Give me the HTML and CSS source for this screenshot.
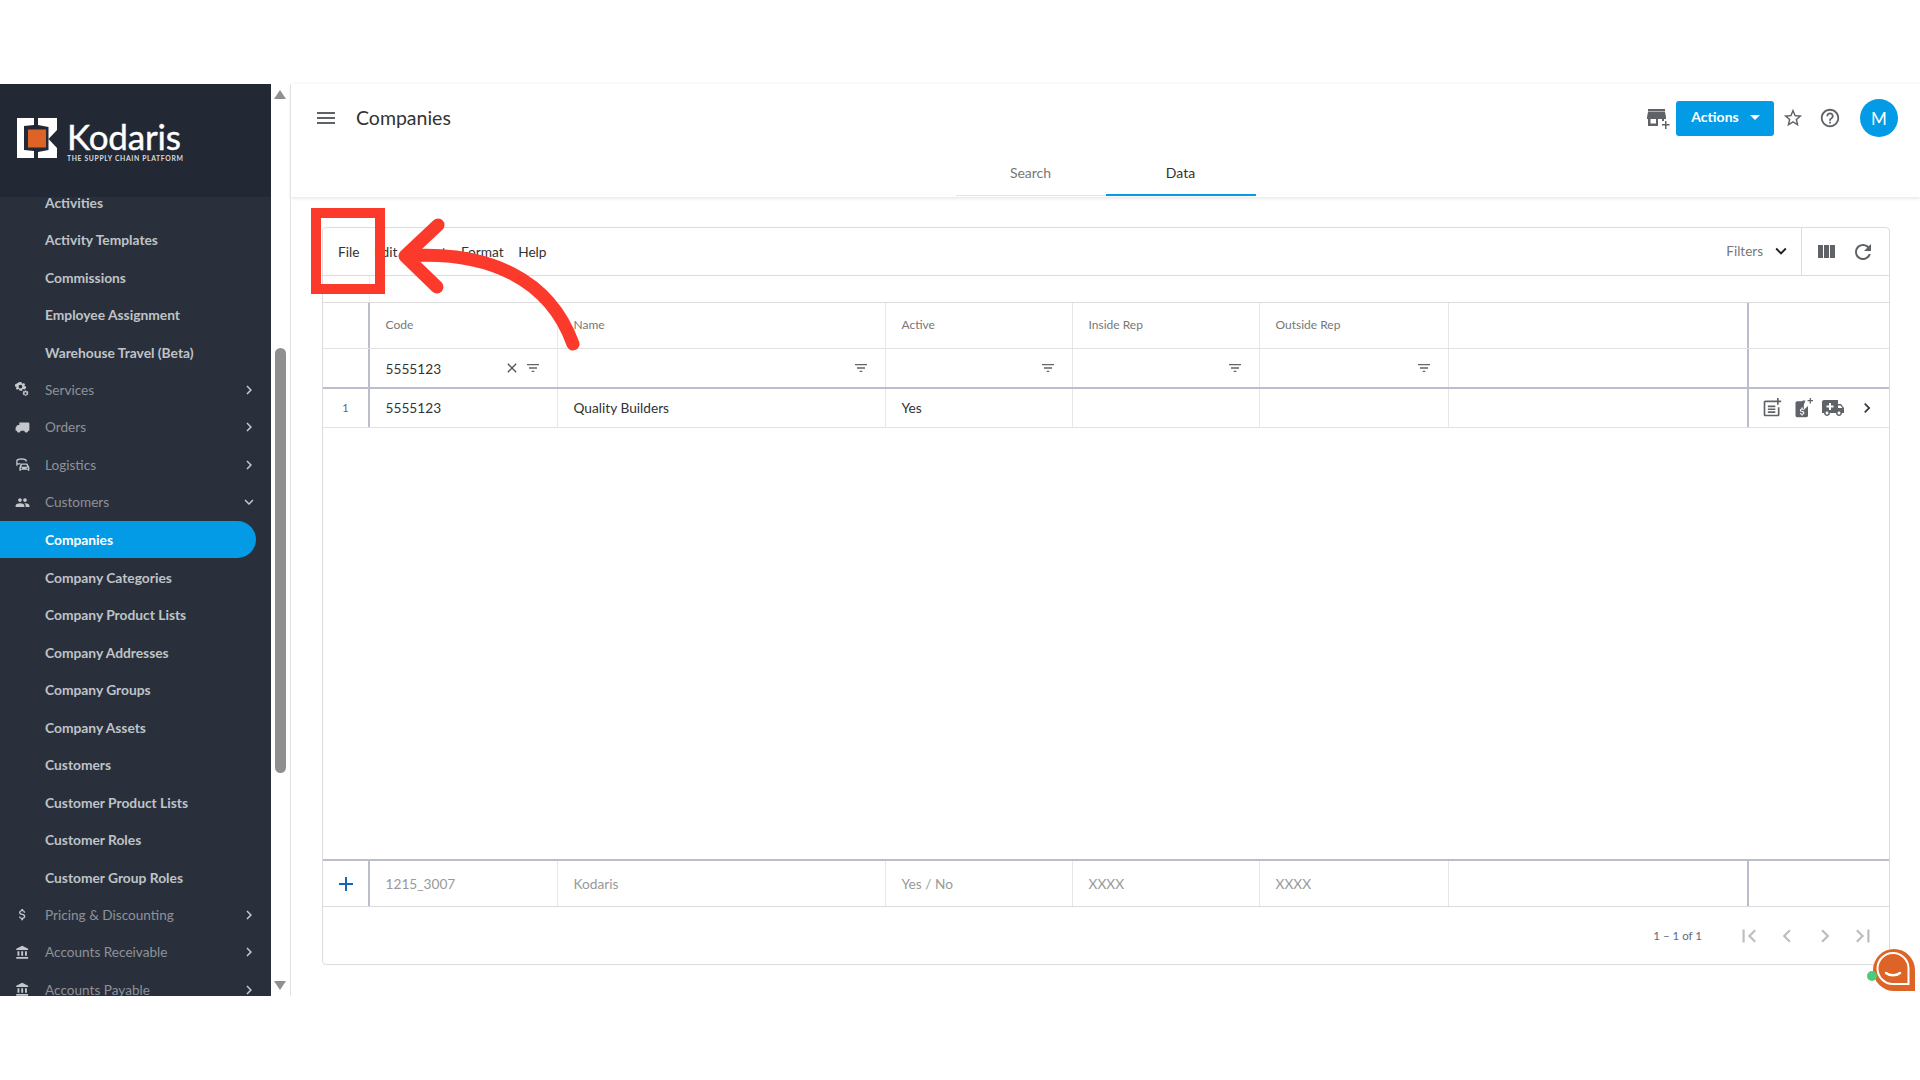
FILE: index.html
```html
<!DOCTYPE html>
<html lang="en">
<head>
  <meta charset="UTF-8">
  <meta name="viewport" content="width=device-width, initial-scale=1.0">
  <title>Companies</title>
  <link rel="stylesheet" href="styles.css">
</head>
<body>

<svg class="sprite" xmlns="http://www.w3.org/2000/svg">
  <symbol id="i-menu" viewBox="0 0 24 24"><path d="M3 18h18v-2H3v2zm0-5h18v-2H3v2zm0-7v2h18V6H3z"/></symbol>
  <symbol id="i-star" viewBox="0 0 24 24"><path d="M22 9.24l-7.19-.62L12 2 9.19 8.63 2 9.24l5.46 4.73L5.82 21 12 17.27 18.18 21l-1.63-7.03L22 9.24zM12 15.4l-3.76 2.27 1-4.28-3.32-2.88 4.38-.38L12 6.1l1.71 4.04 4.38.38-3.32 2.88 1 4.28L12 15.4z"/></symbol>
  <symbol id="i-help" viewBox="0 0 24 24"><path d="M11 18h2v-2h-2v2zm1-16C6.48 2 2 6.48 2 12s4.48 10 10 10 10-4.48 10-10S17.52 2 12 2zm0 18c-4.41 0-8-3.59-8-8s3.59-8 8-8 8 3.59 8 8-3.59 8-8 8zm0-14c-2.21 0-4 1.79-4 4h2c0-1.1.9-2 2-2s2 .9 2 2c0 2-3 1.75-3 5h2c0-2.25 3-2.5 3-5 0-2.21-1.79-4-4-4z"/></symbol>
  <symbol id="i-store" viewBox="0 0 24 24"><path d="M19 3H2v2.500h17V3zm1 10v-2l-1-5H2l-1 5v2h1v7h10v-7h4v2h2v-2h2zm-10 4.500H4.500V13H10v4.500z"/><path d="M20 15h1.500v3H24.500v1.500h-3V23H20v-3.500h-3V18h3z" transform="translate(-1 0)"/></symbol>
  <symbol id="i-columns" viewBox="0 0 24 24"><path d="M10 18h5V5h-5v13zm-6 0h5V5H4v13zM16 5v13h5V5h-5z"/></symbol>
  <symbol id="i-refresh" viewBox="0 0 24 24"><path d="M17.65 6.350C16.200 4.900 14.210 4 12 4c-4.420 0-7.990 3.580-7.990 8s3.570 8 7.990 8c3.730 0 6.840-2.550 7.730-6h-2.080c-.82 2.330-3.040 4-5.650 4-3.310 0-6-2.690-6-6s2.690-6 6-6c1.660 0 3.140.69 4.220 1.780L13 11h7V4l-2.350 2.350z"/></symbol>
  <symbol id="i-down" viewBox="0 0 24 24"><path d="M16.590 8.590L12 13.170 7.410 8.590 6 10l6 6 6-6z"/></symbol>
  <symbol id="i-right" viewBox="0 0 24 24"><path d="M10 6L8.590 7.410 13.170 12l-4.580 4.590L10 18l6-6z"/></symbol>
  <symbol id="i-left" viewBox="0 0 24 24"><path d="M15.410 7.410L14 6l-6 6 6 6 1.410-1.410L10.830 12z"/></symbol>
  <symbol id="i-close" viewBox="0 0 24 24"><path d="M19 6.410L17.590 5 12 10.590 6.410 5 5 6.410 10.590 12 5 17.590 6.410 19 12 13.410 17.590 19 19 17.590 13.410 12z"/></symbol>
  <symbol id="i-filter" viewBox="0 0 24 24"><path d="M10 18h4v-2h-4v2zM3 6v2h18V6H3zm3 7h12v-2H6v2z"/></symbol>
  <symbol id="i-first" viewBox="0 0 24 24"><path d="M18.410 16.590L13.820 12l4.590-4.590L17 6l-6 6 6 6zM6 6h2v12H6z"/></symbol>
  <symbol id="i-last" viewBox="0 0 24 24"><path d="M5.590 7.410L10.180 12l-4.590 4.590L7 18l6-6-6-6zM16 6h2v12h-2z"/></symbol>
  <symbol id="i-add" viewBox="0 0 24 24"><path d="M19 13h-6v6h-2v-6H5v-2h6V5h2v6h6v2z"/></symbol>
  <symbol id="i-people" viewBox="0 0 24 24"><path d="M16 11c1.660 0 2.990-1.340 2.990-3S17.660 5 16 5c-1.660 0-3 1.340-3 3s1.340 3 3 3zm-8 0c1.660 0 2.990-1.340 2.990-3S9.660 5 8 5C6.340 5 5 6.340 5 8s1.340 3 3 3zm0 2c-2.330 0-7 1.170-7 3.500V19h14v-2.500c0-2.330-4.670-3.500-7-3.500zm8 0c-.29 0-.62.02-.97.05 1.160.84 1.970 1.970 1.970 3.450V19h6v-2.500c0-2.330-4.670-3.500-7-3.500z"/></symbol>
  <symbol id="i-bank" viewBox="0 0 24 24"><path d="M4 10v7h3v-7H4zm6 0v7h3v-7h-3zM2 22h19v-3H2v3zm14-12v7h3v-7h-3zm-4.500-9L2 6v2h19V6l-9.500-5z"/></symbol>
  <symbol id="i-dollar" viewBox="0 0 24 24"><path d="M11.800 10.900c-2.270-.59-3-1.200-3-2.150 0-1.090 1.010-1.850 2.700-1.850 1.780 0 2.440.85 2.500 2.100h2.210c-.07-1.720-1.120-3.300-3.210-3.810V3h-3v2.160c-1.940.42-3.500 1.680-3.500 3.610 0 2.310 1.910 3.460 4.700 4.130 2.500.6 3 1.480 3 2.410 0 .69-.49 1.790-2.700 1.790-2.060 0-2.870-.92-2.980-2.100h-2.200c.12 2.190 1.760 3.420 3.680 3.830V21h3v-2.150c1.950-.37 3.500-1.500 3.500-3.550 0-2.840-2.430-3.810-4.700-4.400z"/></symbol>
  <symbol id="i-gears" viewBox="0 0 24 24"><path fill-rule="evenodd" d="M8 1h3.500l.5 2.200 1.700.8 2-1.200 2.300 2.400-1.200 1.900.8 1.700 2.100.5v3.300l-2.100.5-.8 1.700-2-1.200-1.700.8-.5 2.200H8l-.5-2.200-1.700-.8-2 1.200L1.500 13l1.200-1.900-.8-1.700L0 8.900V5.600zm1.700 5a3.300 3.300 0 1 0 0 6.600 3.300 3.300 0 0 0 0-6.600z" transform="translate(0 -1) scale(.9)"/><path fill-rule="evenodd" d="M18 13.500l.6 1.500 1.600-.5 1.200 2-1.200 1.200 1.200 1.200-1.200 2-1.600-.5-.6 1.600h-2.300l-.6-1.600-1.600.5-1.200-2 1.200-1.200-1.200-1.200 1.200-2 1.600.5.600-1.500zm-1.200 3a1.700 1.700 0 1 0 0 3.400 1.700 1.700 0 0 0 0-3.400z"/></symbol>
  <symbol id="i-orders" viewBox="0 0 24 24"><path d="M4 8h3V4h14c1.100 0 2 .9 2 2v11h-2c0 1.660-1.340 3-3 3s-3-1.340-3-3H9c0 1.660-1.340 3-3 3s-3-1.340-3-3H1v-5l3-4z"/></symbol>
  <symbol id="i-logistics" viewBox="0 0 24 24"><path d="M2 14V6c0-2.500 2.500-4 8.500-4S19 3.500 19 6v1h-2V6.500C16 5 14 4.200 10.500 4.200S5 5 4 6.500V10h5v2H4v2z"/><path fill-rule="evenodd" d="M21.400 12.500c-.2-.6-.8-1-1.400-1h-8.500c-.7 0-1.200.4-1.400 1L8 17.500V23h2.500v-1.500h11V23H24v-5.500zM12.200 13.500h7.100l1 3.200H11.200zM11.300 20.300a1.200 1.200 0 1 1 0-2.400 1.200 1.200 0 0 1 0 2.400zm9.400 0a1.200 1.200 0 1 1 0-2.400 1.200 1.200 0 0 1 0 2.400z" transform="translate(-1 -1)"/></symbol>
  <symbol id="i-note" viewBox="0 0 24 24"><path d="M19 11v9H4V5h11V3H4c-1.100 0-2 .9-2 2v15c0 1.100.9 2 2 2h15c1.100 0 2-.9 2-2v-9zM7 9h9v2H7zm0 3.500h9v2H7zM7 16h9v2H7zM20 0v3h3v2h-3v3h-2V5h-3V3h3V0z"/></symbol>
  <symbol id="i-tag" viewBox="0 0 24 24"><path d="M15 3l-3 0-1 1H5c-1.100 0-2 .9-2 2v15c0 1.100.9 2 2 2h11c1.100 0 2-.9 2-2V9.500L13 14V8zM11.700 19.700v1.300h-1.600v-1.200c-1-.2-1.800-.8-1.900-1.900h1.200c.1.600.5 1 1.500 1s1.400-.5 1.400-.9c0-.5-.3-.9-1.600-1.200-1.500-.3-2.500-.9-2.500-2.100 0-1 .8-1.700 1.900-1.900V11.500h1.600v1.300c1.100.3 1.700 1.100 1.700 2H12.300c0-.7-.4-1.100-1.300-1.100s-1.400.4-1.400.9.400.8 1.600 1.100 2.500.8 2.500 2.200c0 1-.8 1.600-2 1.800zM20 0h1.500v2.500H24V4h-2.500v2.500H20V4h-2.500V2.500H20z"/></symbol>
  <symbol id="i-truck" viewBox="0 0 24 24"><path fill-rule="evenodd" d="M20 8h-3V4H3c-1.100 0-2 .9-2 2v11h2c0 1.660 1.340 3 3 3s3-1.340 3-3h6c0 1.660 1.340 3 3 3s3-1.340 3-3h2v-5l-3-4zM6 18.500c-.83 0-1.500-.67-1.500-1.500s.67-1.500 1.500-1.500 1.500.67 1.500 1.500-.67 1.500-1.500 1.500zm13.500-9l1.960 2.500H17V9.500h2.500zm-1.500 9c-.83 0-1.500-.67-1.500-1.500s.67-1.500 1.500-1.500 1.500.67 1.500 1.500-.67 1.500-1.500 1.500zM8 7h2v2.500h2.500v2H10V14H8v-2.500H5.500v-2H8z"/></symbol>
</svg>

<div class="band-top"></div>

<div class="app">
  <aside class="sidebar">
    <div class="brand">
      <svg class="brand-mark" viewBox="0 0 40 40">
        <path fill="#fff" d="M0 0h17v7L7 8v24l10 1v7H0z"/>
        <path fill="#fff" d="M21 0H40V12L31.500 21L40 30V40H21V34L31.500 32V9L21 7z"/>
        <rect x="11" y="11.500" width="18" height="18" fill="#dd6426"/>
      </svg>
      <div class="brand-text">
        <span class="brand-name">Kodaris</span>
        <span class="brand-tag">THE SUPPLY CHAIN PLATFORM</span>
      </div>
    </div>
    <nav class="nav">
      <a class="nav-item">Activities</a>
      <a class="nav-item">Activity Templates</a>
      <a class="nav-item">Commissions</a>
      <a class="nav-item">Employee Assignment</a>
      <a class="nav-item">Warehouse Travel (Beta)</a>
      <a class="nav-item nav-group"><svg class="nav-icon"><use href="#i-gears"/></svg>Services<svg class="nav-arrow"><use href="#i-right"/></svg></a>
      <a class="nav-item nav-group"><svg class="nav-icon"><use href="#i-orders"/></svg>Orders<svg class="nav-arrow"><use href="#i-right"/></svg></a>
      <a class="nav-item nav-group"><svg class="nav-icon"><use href="#i-logistics"/></svg>Logistics<svg class="nav-arrow"><use href="#i-right"/></svg></a>
      <a class="nav-item nav-group"><svg class="nav-icon"><use href="#i-people"/></svg>Customers<svg class="nav-arrow"><use href="#i-down"/></svg></a>
      <a class="nav-item active">Companies</a>
      <a class="nav-item">Company Categories</a>
      <a class="nav-item">Company Product Lists</a>
      <a class="nav-item">Company Addresses</a>
      <a class="nav-item">Company Groups</a>
      <a class="nav-item">Company Assets</a>
      <a class="nav-item">Customers</a>
      <a class="nav-item">Customer Product Lists</a>
      <a class="nav-item">Customer Roles</a>
      <a class="nav-item">Customer Group Roles</a>
      <a class="nav-item nav-group"><svg class="nav-icon"><use href="#i-dollar"/></svg>Pricing &amp; Discounting<svg class="nav-arrow"><use href="#i-right"/></svg></a>
      <a class="nav-item nav-group"><svg class="nav-icon"><use href="#i-bank"/></svg>Accounts Receivable<svg class="nav-arrow"><use href="#i-right"/></svg></a>
      <a class="nav-item nav-group"><svg class="nav-icon"><use href="#i-bank"/></svg>Accounts Payable<svg class="nav-arrow"><use href="#i-right"/></svg></a>
    </nav>
  </aside>

  <div class="scrollbar">
    <span class="scroll-up"></span>
    <span class="scroll-thumb"></span>
    <span class="scroll-down"></span>
  </div>

  <main class="main">
    <header class="topbar">
      <div class="topbar-row">
        <svg class="menu-btn"><use href="#i-menu"/></svg>
        <h1 class="page-title">Companies</h1>
        <div class="topbar-actions">
          <svg class="store-btn"><use href="#i-store"/></svg>
          <button class="actions-btn">Actions<span class="caret"></span></button>
          <svg class="top-icon"><use href="#i-star"/></svg>
          <svg class="top-icon help"><use href="#i-help"/></svg>
          <span class="avatar">M</span>
        </div>
      </div>
      <div class="tabs">
        <span class="tab">Search</span>
        <span class="tab active">Data</span>
      </div>
    </header>

    <section class="content">
      <div class="card">
        <div class="toolbar">
          <div class="menu">
            <span>File</span><span>Edit</span><span>Insert</span><span>Format</span><span>Help</span>
          </div>
          <div class="filters">Filters<svg class="filters-arrow"><use href="#i-down"/></svg></div>
          <div class="tools">
            <svg class="tool"><use href="#i-columns"/></svg>
            <svg class="tool"><use href="#i-refresh"/></svg>
          </div>
        </div>
        <div class="gap-row"><span></span></div>

        <div class="grid head-row">
          <div class="cell num"></div>
          <div class="cell">Code</div>
          <div class="cell">Name</div>
          <div class="cell">Active</div>
          <div class="cell">Inside Rep</div>
          <div class="cell">Outside Rep</div>
          <div class="cell blank"></div>
          <div class="cell"></div>
        </div>
        <div class="grid filter-row">
          <div class="cell num"></div>
          <div class="cell">5555123<svg class="clear-icon"><use href="#i-close"/></svg><svg class="filter-icon"><use href="#i-filter"/></svg></div>
          <div class="cell"><svg class="filter-icon"><use href="#i-filter"/></svg></div>
          <div class="cell"><svg class="filter-icon"><use href="#i-filter"/></svg></div>
          <div class="cell"><svg class="filter-icon"><use href="#i-filter"/></svg></div>
          <div class="cell"><svg class="filter-icon"><use href="#i-filter"/></svg></div>
          <div class="cell blank"></div>
          <div class="cell"></div>
        </div>
        <div class="grid data-row">
          <div class="cell num">1</div>
          <div class="cell">5555123</div>
          <div class="cell">Quality Builders</div>
          <div class="cell">Yes</div>
          <div class="cell"></div>
          <div class="cell"></div>
          <div class="cell blank"></div>
          <div class="cell row-actions">
            <svg class="row-icon"><use href="#i-note"/></svg>
            <svg class="row-icon"><use href="#i-tag"/></svg>
            <svg class="row-icon truck"><use href="#i-truck"/></svg>
            <svg class="row-icon next"><use href="#i-right"/></svg>
          </div>
        </div>

        <div class="table-space"></div>

        <div class="grid add-row">
          <div class="cell num"><svg class="add-icon"><use href="#i-add"/></svg></div>
          <div class="cell">1215_3007</div>
          <div class="cell">Kodaris</div>
          <div class="cell">Yes / No</div>
          <div class="cell">XXXX</div>
          <div class="cell">XXXX</div>
          <div class="cell blank"></div>
          <div class="cell"></div>
        </div>

        <div class="pager">
          <span class="pager-label">1 – 1 of 1</span>
          <svg class="pager-icon"><use href="#i-first"/></svg>
          <svg class="pager-icon"><use href="#i-left"/></svg>
          <svg class="pager-icon"><use href="#i-right"/></svg>
          <svg class="pager-icon"><use href="#i-last"/></svg>
        </div>
      </div>
    </section>
  </main>
</div>

<!-- tutorial markup over the page -->
<div class="callout-box"></div>
<svg class="callout-arrow" width="220" height="170" viewBox="380 200 220 170">
  <path d="M405 256C490 250 550 280 573 344M438 225L405 256L437 287" fill="none" stroke="#fb3a2c" stroke-width="13" stroke-linecap="round" stroke-linejoin="round"/>
</svg>

<div class="chat-widget">
  <svg width="42" height="42" viewBox="0 0 42 42">
    <path fill="#dd6426" d="M21 0a21 21 0 0 1 21 21v21H21A21 21 0 0 1 21 0z"/>
    <path fill="none" stroke="#fff" stroke-width="2" d="M21 4a15.500 15.500 0 0 1 15.500 15.500V35H21a15.500 15.500 0 0 1 0-31z" transform="translate(-1 0)"/>
    <path fill="none" stroke="#fff" stroke-width="2.500" stroke-linecap="round" d="M13 24c4 3 10 3 14 0"/>
  </svg>
  <span class="chat-dot"></span>
</div>

</body>
</html>
```

FILE: styles.css
```css
* {
  box-sizing: border-box;
}
body {
  font-family: "Lato", "Noto Sans", sans-serif;
  margin: 0;
  padding: 0;
  width: 1920px;
  height: 1080px;
  overflow: hidden;
  position: relative;
  background-color: #fff;
  color: #333;
}
.sprite {
  display: none;
}
svg {
  fill: currentColor;
}
.band-top {
  height: 84px;
}
.app {
  display: flex;
  height: 912px;
}

/* sidebar */
.sidebar {
  width: 271px;
  background-color: #2a303b;
  overflow: hidden;
  flex-shrink: 0;
}
.brand {
  position: relative;
  z-index: 1;
  display: flex;
  gap: 10px;
  height: 113px;
  padding: 34px 0 0 17px;
  background-color: #232934;
}
.brand-mark {
  width: 40px;
  height: 40px;
}
.brand-text {
  display: flex;
  flex-direction: column;
  color: #fff;
}
.brand-name {
  font-size: 35px;
  line-height: 36px;
  letter-spacing: -0.2px;
  -webkit-text-stroke: 0.4px #fff;
}
.brand-tag {
  font-size: 6.800px;
  font-weight: 700;
  letter-spacing: 0.65px;
  line-height: 8px;
  white-space: nowrap;
  color: #d8dadd;
}
.nav {
  margin-top: -13.700px;
}
.nav-item {
  display: flex;
  align-items: center;
  height: 37.500px;
  padding-left: 45px;
  font-size: 13.800px;
  font-weight: 700;
  color: #bfc3c8;
}
.nav-group {
  position: relative;
  font-size: 13.600px;
  font-weight: 400;
  color: #8d929a;
}
.nav-item.active {
  width: 256px;
  background-color: #039be5;
  color: #fff;
  border-radius: 0 19px 19px 0;
}
.nav-icon {
  position: absolute;
  left: 15px;
  width: 15px;
  height: 15px;
  color: #c4c7cb;
}
.nav-arrow {
  position: absolute;
  left: 240px;
  width: 18px;
  height: 18px;
  color: #c4c7cb;
}

/* fake scrollbar */
.scrollbar {
  position: relative;
  width: 20px;
  border-right: 1px solid #e2e2e2;
  flex-shrink: 0;
}
.scroll-up,
.scroll-down {
  position: absolute;
  left: 3px;
  width: 0;
  height: 0;
  border-left: 6px solid transparent;
  border-right: 6px solid transparent;
}
.scroll-up {
  top: 6px;
  border-bottom: 9px solid #8f8f8f;
}
.scroll-down {
  bottom: 6px;
  border-top: 9px solid #8f8f8f;
}
.scroll-thumb {
  position: absolute;
  left: 4px;
  top: 264px;
  width: 11px;
  height: 425px;
  background-color: #8f8f8f;
  border-radius: 6px;
}

/* main */
.main {
  flex: 1;
  display: flex;
  flex-direction: column;
  min-width: 0;
}
.topbar {
  height: 113px;
  box-shadow: 0 1px 4px rgba(0, 0, 0, 0.12);
}
.topbar-row {
  display: flex;
  align-items: center;
  height: 68px;
  padding: 0 22px 0 23px;
}
.menu-btn {
  width: 24px;
  height: 24px;
  color: #5f6368;
}
.page-title {
  margin: -2px 0 0 18px;
  font-size: 19.500px;
  font-weight: 400;
  color: #333;
}
.topbar-actions {
  margin-left: auto;
  display: flex;
  align-items: center;
}
.store-btn {
  width: 24px;
  height: 24px;
  margin-right: 6px;
  color: #5f6368;
}
.actions-btn {
  display: flex;
  align-items: center;
  justify-content: center;
  gap: 11px;
  width: 98px;
  height: 35px;
  padding: 0 0 3px 1px;
  border: 0;
  border-radius: 3px;
  background-color: #039be5;
  color: #fff;
  font-family: inherit;
  font-size: 14px;
  font-weight: 700;
}
.caret {
  width: 0;
  height: 0;
  margin-top: 2px;
  border-left: 5px solid transparent;
  border-right: 5px solid transparent;
  border-top: 5px solid #fff;
}
.top-icon {
  width: 22px;
  height: 22px;
  margin-left: 8px;
  color: #5f6368;
}
.top-icon.help {
  width: 22px;
  margin-left: 15px;
}
.avatar {
  display: flex;
  align-items: center;
  justify-content: center;
  width: 38px;
  height: 38px;
  margin-left: 19px;
  border-radius: 50%;
  background-color: #039be5;
  color: #fff;
  font-size: 17px;
}
.tabs {
  display: flex;
  justify-content: center;
}
.tab {
  width: 150px;
  height: 44px;
  padding-bottom: 2px;
  display: flex;
  align-items: center;
  justify-content: center;
  font-size: 14px;
  color: #777;
  border-bottom: 1px solid #e4e4e4;
}
.tab.active {
  color: #333;
  border-bottom: 2px solid #039be5;
}

/* card + table */
.content {
  flex: 1;
  min-height: 0;
  padding: 30px 30px 31px 31px;
}
.card {
  height: 100%;
  display: flex;
  flex-direction: column;
  border: 1px solid #dcdcdc;
  border-radius: 4px;
}
.toolbar {
  display: flex;
  align-items: center;
  height: 48px;
  flex-shrink: 0;
  border-bottom: 1px solid #dcdcdc;
}
.menu {
  display: flex;
  gap: 14.500px;
  padding-left: 15px;
  font-size: 13.700px;
  color: #333;
}
.filters {
  margin-left: auto;
  display: flex;
  align-items: center;
  gap: 7px;
  padding-bottom: 1px;
  font-size: 13.500px;
  color: #777;
  padding-right: 9px;
}
.filters-arrow {
  width: 22px;
  height: 22px;
  color: #222;
}
.tools {
  display: flex;
  align-items: center;
  gap: 13px;
  height: 100%;
  width: 88px;
  padding-left: 12px;
  border-left: 1px solid #dcdcdc;
}
.tool {
  width: 24px;
  height: 24px;
  color: #5f6368;
}
.gap-row {
  height: 27px;
  flex-shrink: 0;
  border-bottom: 1px solid #dcdcdc;
}
.gap-row span {
  display: block;
  width: 47px;
  height: 26px;
  border-right: 1px solid #eee;
}
.grid {
  display: grid;
  grid-template-columns: 47px 188px 328px 187px 187px 189px 300px 1fr;
  flex-shrink: 0;
  font-size: 13.700px;
}
.cell {
  display: flex;
  align-items: center;
  padding-left: 15.500px;
  border-right: 1px solid #e6e6e6;
  position: relative;
}
.cell:last-child {
  border-right: 0;
}
.cell.num {
  justify-content: center;
  padding-left: 0;
  font-size: 11px;
  color: #666;
  border-right: 2px solid #b9bdcc;
}
.cell.blank {
  border-right: 2px solid #b9bdcc;
}
.head-row {
  height: 46px;
  border-bottom: 1px solid #e2e2e2;
  font-size: 12px;
  color: #777;
}
.head-row .cell {
  padding-bottom: 2px;
}
.filter-row {
  height: 40px;
  border-bottom: 2px solid #b9bdcc;
}
.data-row {
  height: 39px;
  border-bottom: 1px solid #e2e2e2;
}
.data-row .cell {
  padding-bottom: 2px;
}
.data-row .row-actions {
  padding-bottom: 0;
}
.table-space {
  flex: 1;
}
.add-row {
  height: 48px;
  border-top: 2px solid #b9bdcc;
  border-bottom: 1px solid #dcdcdc;
  color: #999;
}
.filter-icon {
  position: absolute;
  right: 16px;
  width: 16px;
  height: 16px;
  color: #666;
}
.clear-icon {
  position: absolute;
  right: 37px;
  width: 16px;
  height: 16px;
  color: #555;
}
.row-actions {
  gap: 10.500px;
  padding-left: 13px;
}
.row-icon {
  width: 20px;
  height: 20px;
  color: #5f6368;
}
.row-icon.truck {
  width: 24px;
  height: 24px;
  margin: 0 -2px;
}
.row-icon.next {
  margin-left: 3px;
  color: #333;
}
.add-icon {
  width: 24px;
  height: 24px;
  color: #1565c0;
}
.pager {
  height: 57px;
  flex-shrink: 0;
  display: flex;
  align-items: center;
  justify-content: flex-end;
  gap: 12px;
  padding-right: 13px;
}
.pager-label {
  font-size: 11.500px;
  color: #5c6b80;
  margin-right: 22px;
}
.pager-icon {
  width: 26px;
  height: 26px;
  color: #bdbdbd;
}

/* tutorial overlay */
.callout-box {
  position: absolute;
  left: 311px;
  top: 208px;
  width: 74px;
  height: 86px;
  border: 10px solid #fb3a2c;
}
.callout-arrow {
  position: absolute;
  left: 380px;
  top: 200px;
}
.chat-widget {
  position: absolute;
  left: 1873px;
  top: 949px;
  width: 42px;
  height: 42px;
}
.chat-dot {
  position: absolute;
  left: -6px;
  top: 22px;
  width: 10px;
  height: 10px;
  border-radius: 50%;
  background-color: #4ccb78;
}
```
